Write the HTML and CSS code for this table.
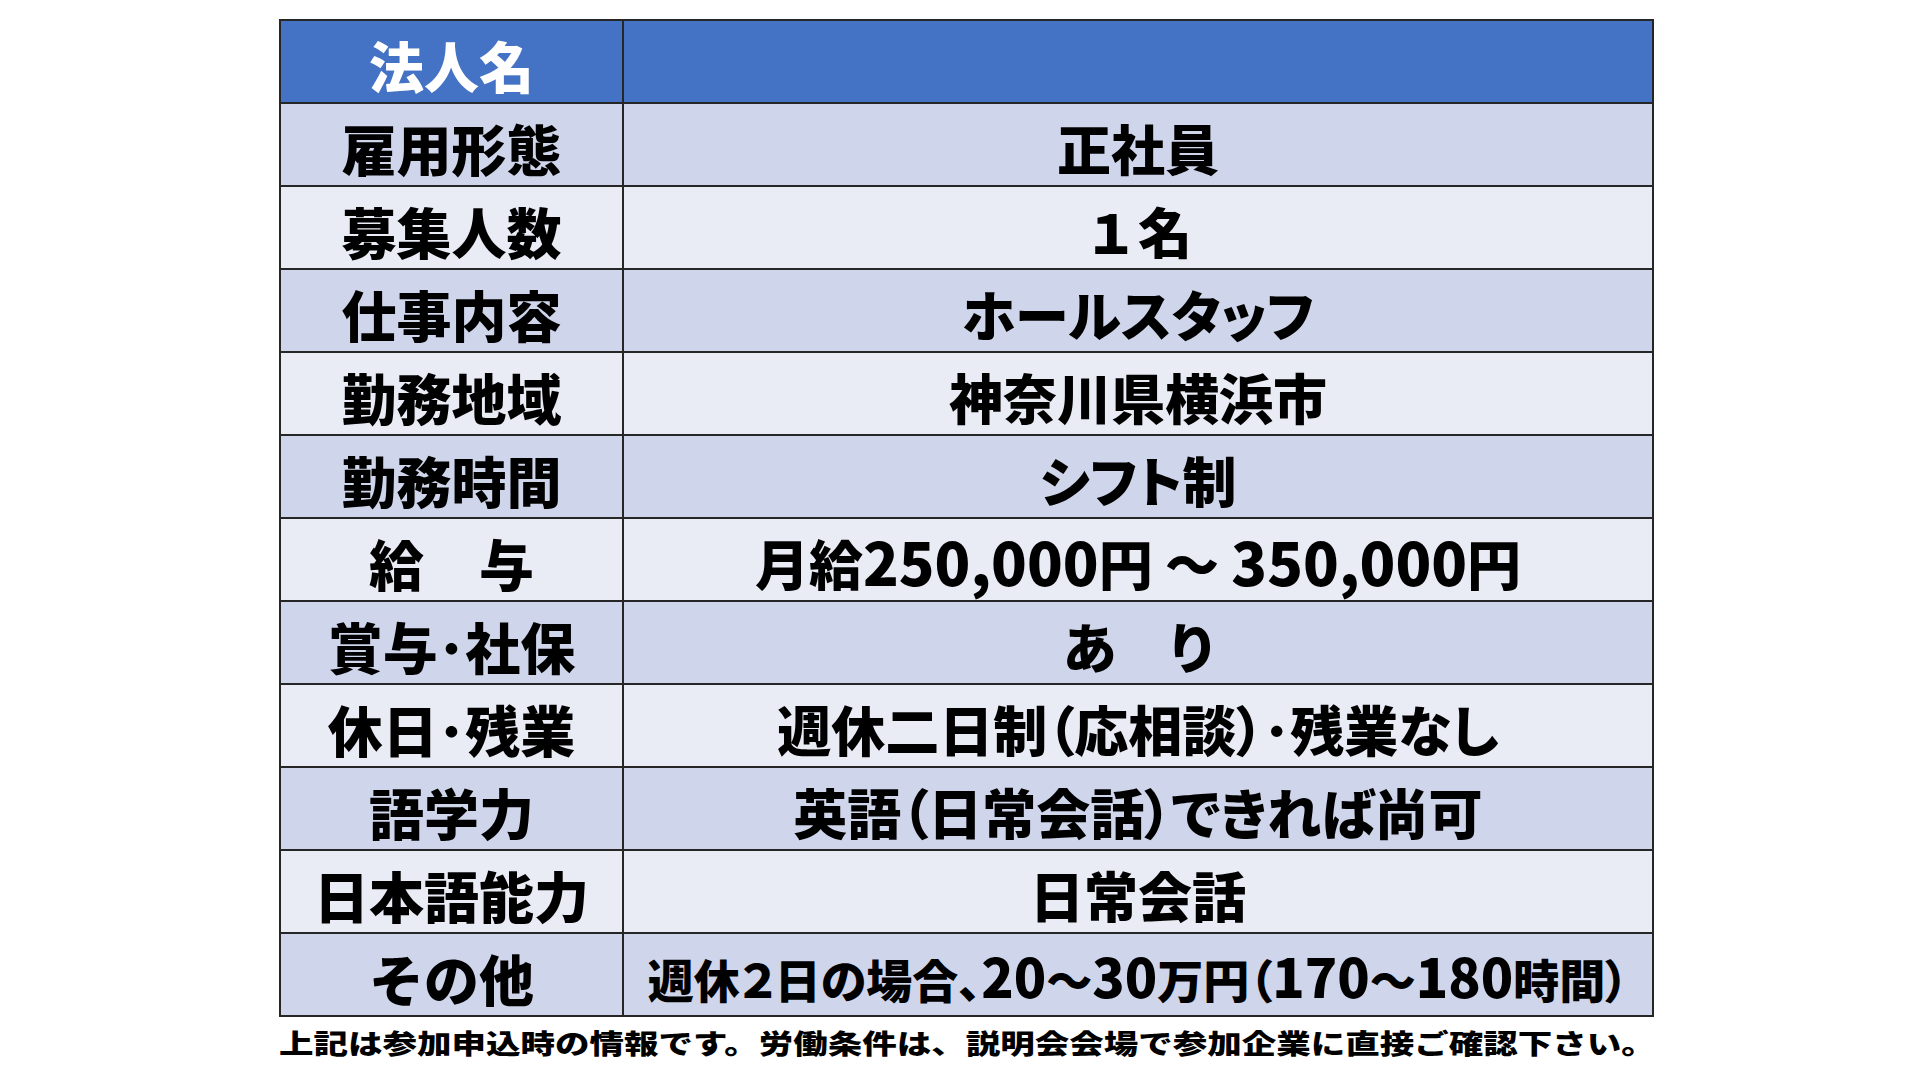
FILE: index.html
```html
<!DOCTYPE html>
<html lang="ja">
<head>
<meta charset="utf-8">
<title>求人情報</title>
<link rel="stylesheet" href="styles.css">
</head>
<body>
<main class="page">
  <table class="job-table">
    <colgroup>
      <col class="col-label">
      <col class="col-value">
    </colgroup>
    <tbody>
      <tr class="row-head">
        <th class="label">法人名</th>
        <td class="value"></td>
      </tr>
      <tr class="row-dark">
        <th class="label">雇用形態</th>
        <td class="value">正社員</td>
      </tr>
      <tr class="row-light">
        <th class="label">募集人数</th>
        <td class="value no-palt">１名</td>
      </tr>
      <tr class="row-dark">
        <th class="label">仕事内容</th>
        <td class="value">ホールスタッフ</td>
      </tr>
      <tr class="row-light">
        <th class="label">勤務地域</th>
        <td class="value">神奈川県横浜市</td>
      </tr>
      <tr class="row-dark">
        <th class="label">勤務時間</th>
        <td class="value">シフト制</td>
      </tr>
      <tr class="row-light">
        <th class="label">給　与</th>
        <td class="value">月給<span class="num">250,000</span>円 ～ <span class="num">350,000</span>円</td>
      </tr>
      <tr class="row-dark">
        <th class="label">賞与･社保</th>
        <td class="value">あ　り</td>
      </tr>
      <tr class="row-light">
        <th class="label">休日･残業</th>
        <td class="value">週休二日制（応相談）･残業なし</td>
      </tr>
      <tr class="row-dark">
        <th class="label">語学力</th>
        <td class="value">英語（日常会話）できれば尚可</td>
      </tr>
      <tr class="row-light">
        <th class="label">日本語能力</th>
        <td class="value">日常会話</td>
      </tr>
      <tr class="row-dark">
        <th class="label">その他</th>
        <td class="value small">週休２日の場合、<span class="num">20</span>～<span class="num">30</span>万円（<span class="num">170</span>～<span class="num">180</span>時間）</td>
      </tr>
    </tbody>
  </table>
  <p class="note"><span class="note-text">上記は参加申込時の情報です。労働条件は、説明会会場で参加企業に直接ご確認下さい。</span></p>
</main>
</body>
</html>
```

FILE: styles.css
```css
html, body {
  margin: 0;
  padding: 0;
  background: #ffffff;
}

body {
  font-family: "Noto Sans CJK JP", "Noto Sans", sans-serif;
  color: #000000;
}

.page {
  padding: 19px 0 0 279px;
}

.job-table {
  width: 1373px;
  border-collapse: collapse;
  table-layout: fixed;
  border: 2px solid #262626;
}

.col-label {
  width: 343px;
}

.col-value {
  width: 1030px;
}

.job-table tr {
  height: 83px;
}

.job-table th,
.job-table td {
  border: 2px solid #262626;
  padding: 6px 0 0 0;
  text-align: center;
  vertical-align: middle;
  font-weight: 900;
  line-height: 1.1;
  white-space: nowrap;
}

.label {
  font-size: 55px;
}

.value {
  font-size: 54px;
  font-feature-settings: "palt" 1;
}

.value.no-palt {
  font-feature-settings: normal;
}

.value.small {
  font-size: 46px;
}

.num {
  font-size: 1.09em;
  line-height: 0.9;
}

.value.small .num {
  font-size: 1.16em;
}

.row-head th,
.row-head td {
  background: #4472c4;
  color: #ffffff;
}

.row-dark th,
.row-dark td {
  background: #cfd5ea;
}

.row-light th,
.row-light td {
  background: #e9ebf5;
}

.note {
  margin: 11px 0 0 0;
  font-size: 27px;
  line-height: 30px;
  font-weight: 900;
  white-space: nowrap;
}

.note-text {
  display: inline-block;
  transform: scaleX(1.278);
  transform-origin: left center;
}
```
